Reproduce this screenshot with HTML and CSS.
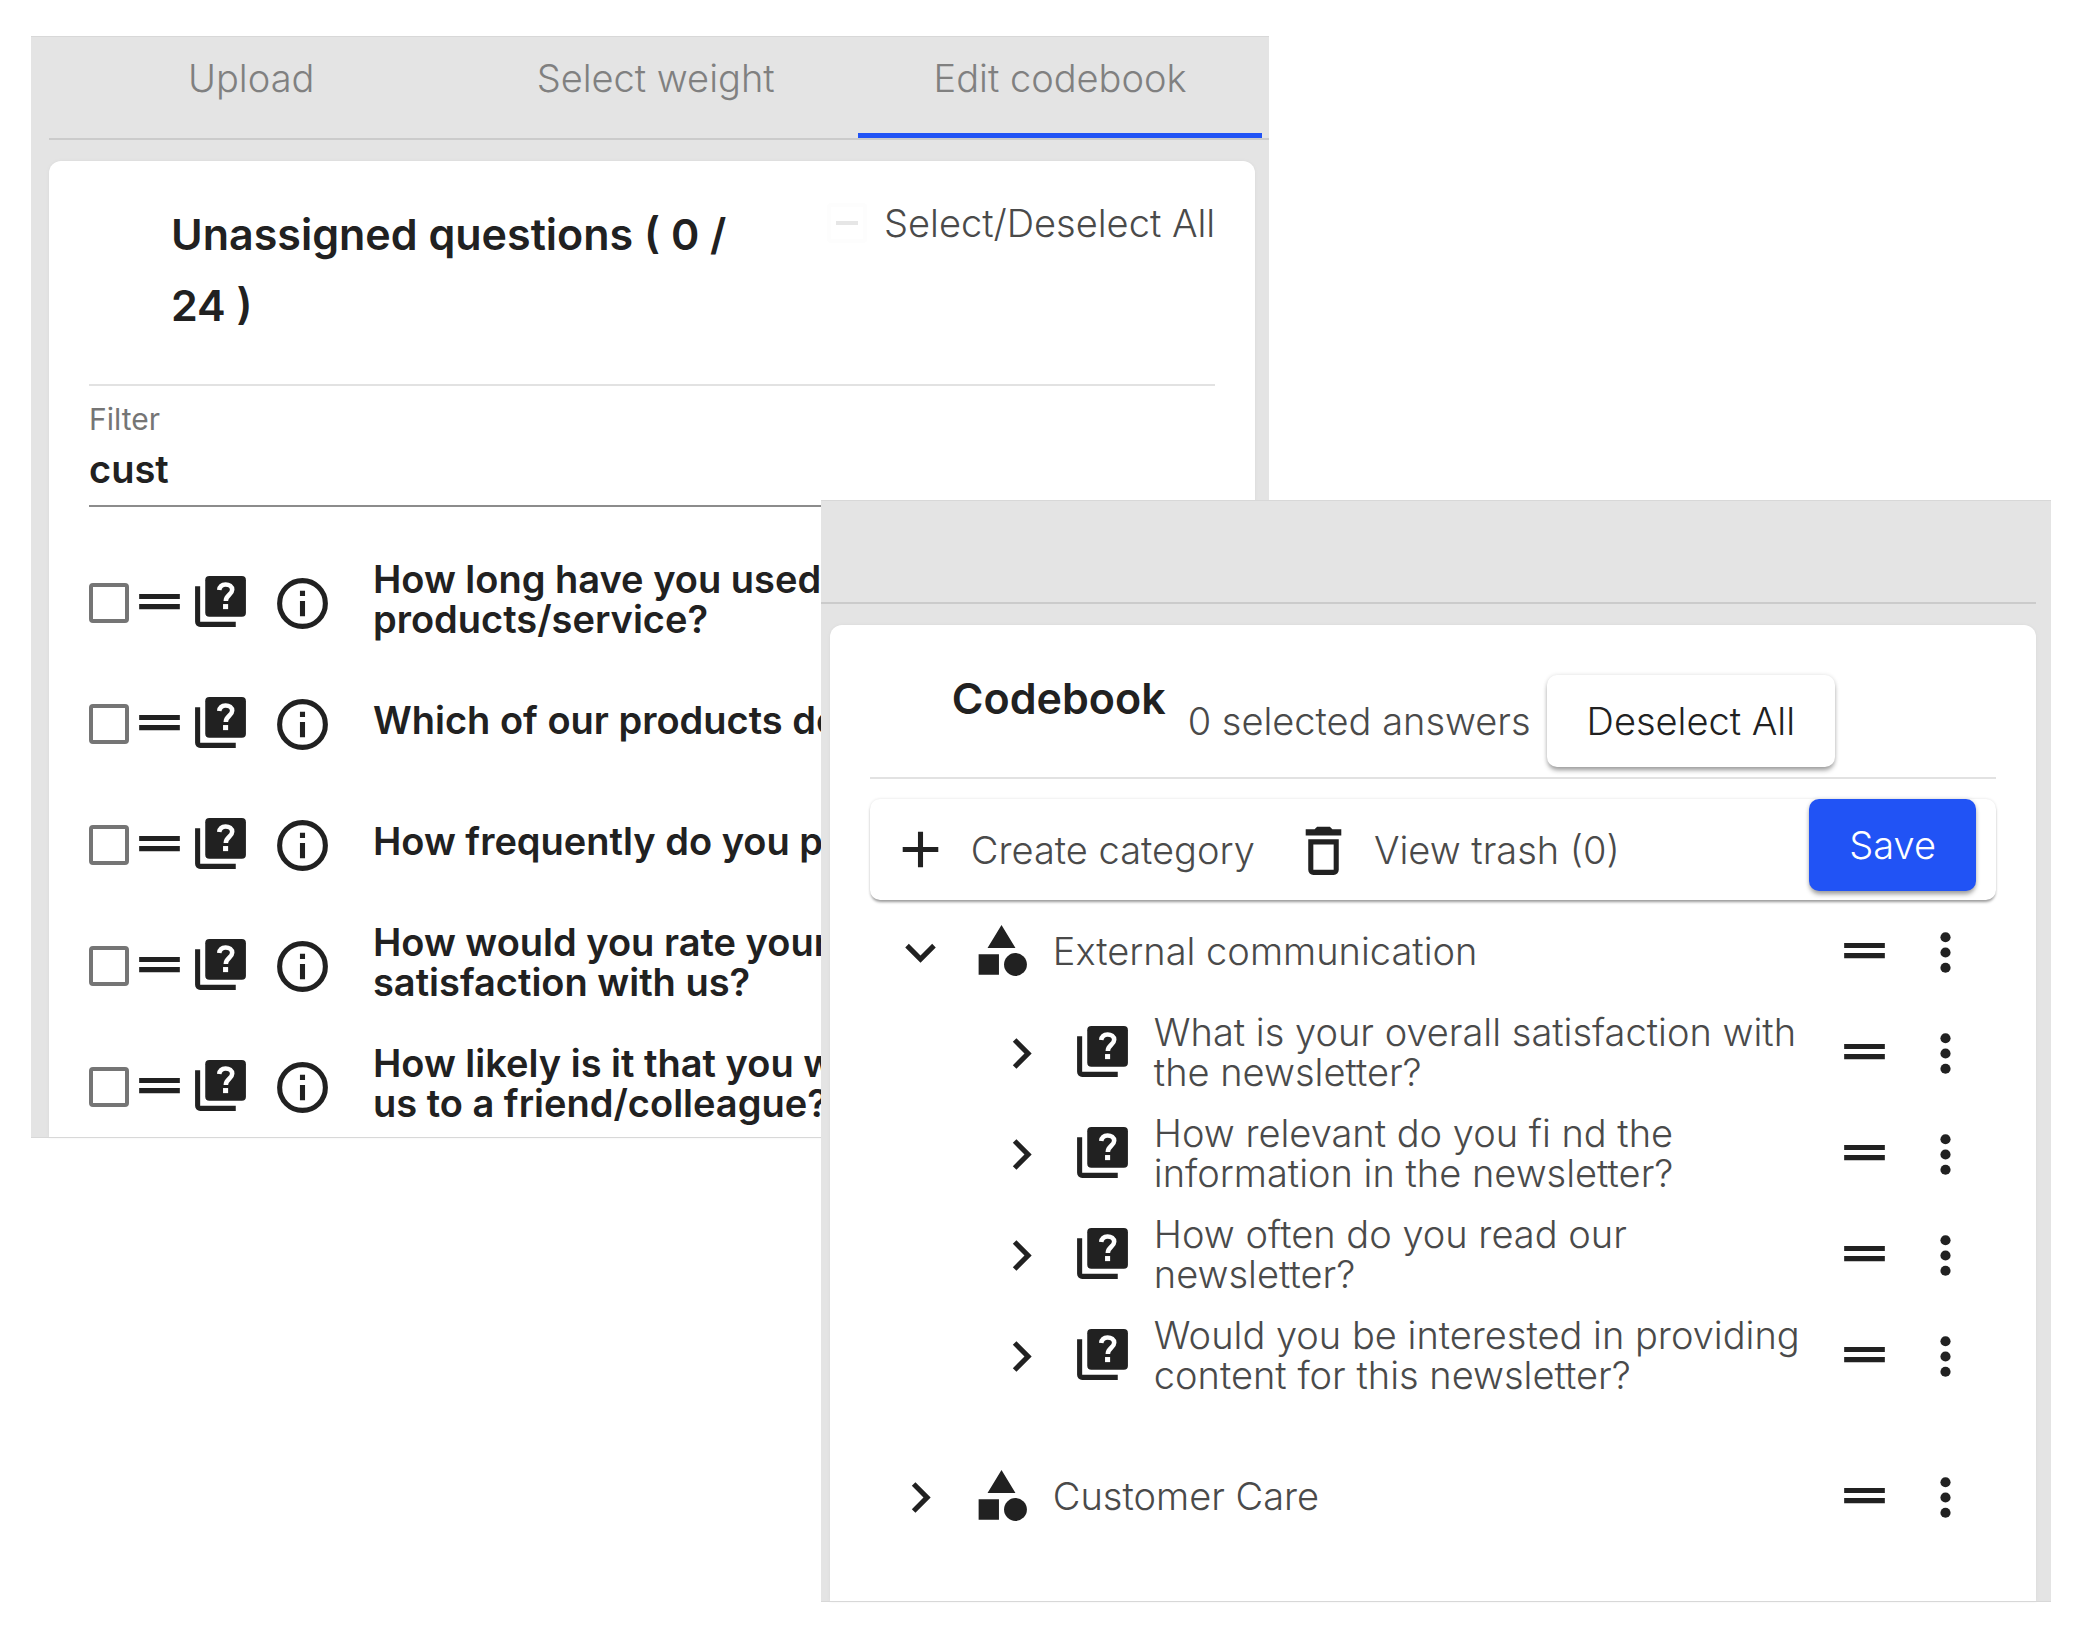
FILE: index.html
```html
<!DOCTYPE html>
<html lang="en">
<head>
  <meta charset="UTF-8">
  <meta name="viewport" content="width=device-width, initial-scale=1.0">
  <title>Edit codebook</title>
  <link rel="stylesheet" href="styles.css">
</head>
<body>

  <!-- Icons -->
  <svg class="sprite" aria-hidden="true">
    <symbol id="drag" viewBox="0 0 24 24"><path d="M4 9h16v2H4zM4 13h16v2H4z"/></symbol>
    <symbol id="quiz" viewBox="0 0 24 24">
      <path d="M4 6H2v14a2 2 0 0 0 2 2h14v-2H4z"/>
      <rect x="6" y="2" width="16" height="16" rx="1.6"/>
      <path d="M11.500 7.500c.2-1.500 1.200-2.200 2.500-2.200 1.400 0 2.600.8 2.600 2.100 0 1.900-2.500 2.100-2.500 4.400" fill="none" stroke="#fff" stroke-width="1.800"/>
      <rect x="13" y="13" width="2" height="2" fill="#fff"/>
    </symbol>
    <symbol id="info" viewBox="0 0 24 24"><circle cx="12" cy="12" r="9" fill="none" stroke="currentColor" stroke-width="2"/><path d="M11 7h2v2h-2zM11 11h2v6h-2z"/></symbol>
    <symbol id="plus" viewBox="0 0 24 24"><path d="M19 13h-6v6h-2v-6H5v-2h6V5h2v6h6z"/></symbol>
    <symbol id="trash" viewBox="0 0 24 24"><path d="M6 20a2 2 0 0 0 2 2h8a2 2 0 0 0 2-2V8H6zM8 10h8v10H8zM15.500 4l-1-1h-5l-1 1H5v2.500h14V4z"/></symbol>
    <symbol id="down" viewBox="0 0 24 24"><path d="M7.410 8.590 12 13.170l4.590-4.580L18 10l-6 6-6-6z"/></symbol>
    <symbol id="right" viewBox="0 0 24 24"><path d="M8.590 16.590 13.170 12 8.590 7.410 10 6l6 6-6 6z"/></symbol>
    <symbol id="category" viewBox="0 0 24 24"><path d="m12 2-5.500 9h11zM3 13.500h8v8H3z"/><circle cx="17.500" cy="17.500" r="4.500"/></symbol>
    <symbol id="more" viewBox="0 0 24 24"><circle cx="12" cy="6" r="2"/><circle cx="12" cy="12" r="2"/><circle cx="12" cy="18" r="2"/></symbol>
  </svg>

  <main class="stage">

    <!-- Unassigned questions -->
    <section class="window window-questions">
      <nav class="tabs" role="tablist">
        <button class="tab" role="tab">Upload</button>
        <button class="tab" role="tab">Select weight</button>
        <button class="tab tab-active" role="tab" aria-selected="true">Edit codebook</button>
      </nav>

      <div class="card">
        <header class="card-header">
          <h2 class="title">Unassigned questions ( 0 / 24 )</h2>
          <label class="select-all"><input type="checkbox" class="check-all" disabled> Select/Deselect All</label>
        </header>

        <div class="filter">
          <label class="filter-label" for="filter">Filter</label>
          <input class="filter-input" type="text" id="filter" value="cust">
        </div>

        <ul class="questions">
          <li class="question">
            <input type="checkbox" class="check" id="q1">
            <svg class="icon"><use href="#drag"/></svg>
            <svg class="icon"><use href="#quiz"/></svg>
            <svg class="icon icon-info"><use href="#info"/></svg>
            <label for="q1">How long have you used<br>products/service?</label>
          </li>
          <li class="question">
            <input type="checkbox" class="check" id="q2">
            <svg class="icon"><use href="#drag"/></svg>
            <svg class="icon"><use href="#quiz"/></svg>
            <svg class="icon icon-info"><use href="#info"/></svg>
            <label for="q2">Which of our products do</label>
          </li>
          <li class="question">
            <input type="checkbox" class="check" id="q3">
            <svg class="icon"><use href="#drag"/></svg>
            <svg class="icon"><use href="#quiz"/></svg>
            <svg class="icon icon-info"><use href="#info"/></svg>
            <label for="q3">How frequently do you purchase</label>
          </li>
          <li class="question">
            <input type="checkbox" class="check" id="q4">
            <svg class="icon"><use href="#drag"/></svg>
            <svg class="icon"><use href="#quiz"/></svg>
            <svg class="icon icon-info"><use href="#info"/></svg>
            <label for="q4">How would you rate your<br>satisfaction with us?</label>
          </li>
          <li class="question">
            <input type="checkbox" class="check" id="q5">
            <svg class="icon"><use href="#drag"/></svg>
            <svg class="icon"><use href="#quiz"/></svg>
            <svg class="icon icon-info"><use href="#info"/></svg>
            <label for="q5">How likely is it that you would<br>us to a friend/colleague?</label>
          </li>
        </ul>
      </div>
    </section>

    <!-- Codebook -->
    <section class="window window-codebook">
      <div class="tabs tabs-empty"></div>

      <div class="card">
        <header class="card-header codebook-header">
          <h2 class="title">Codebook</h2>
          <span class="selected">0 selected answers</span>
          <button class="button">Deselect All</button>
        </header>

        <div class="toolbar">
          <button class="tool"><svg class="icon"><use href="#plus"/></svg>Create category</button>
          <button class="tool"><svg class="icon"><use href="#trash"/></svg>View trash (0)</button>
          <button class="button button-save">Save</button>
        </div>

        <ul class="tree">
          <li>
            <div class="node">
              <button class="icon-button" aria-label="Collapse"><svg class="icon"><use href="#down"/></svg></button>
              <svg class="icon"><use href="#category"/></svg>
              <span class="node-text">External communication</span>
              <svg class="icon"><use href="#drag"/></svg>
              <button class="icon-button" aria-label="More"><svg class="icon"><use href="#more"/></svg></button>
            </div>
            <ul class="tree-children">
              <li class="node">
                <button class="icon-button" aria-label="Expand"><svg class="icon"><use href="#right"/></svg></button>
                <svg class="icon"><use href="#quiz"/></svg>
                <span class="node-text">What is your overall satisfaction with<br>the newsletter?</span>
                <svg class="icon"><use href="#drag"/></svg>
                <button class="icon-button" aria-label="More"><svg class="icon"><use href="#more"/></svg></button>
              </li>
              <li class="node">
                <button class="icon-button" aria-label="Expand"><svg class="icon"><use href="#right"/></svg></button>
                <svg class="icon"><use href="#quiz"/></svg>
                <span class="node-text">How relevant do you fi nd the<br>information in the newsletter?</span>
                <svg class="icon"><use href="#drag"/></svg>
                <button class="icon-button" aria-label="More"><svg class="icon"><use href="#more"/></svg></button>
              </li>
              <li class="node">
                <button class="icon-button" aria-label="Expand"><svg class="icon"><use href="#right"/></svg></button>
                <svg class="icon"><use href="#quiz"/></svg>
                <span class="node-text">How often do you read our<br>newsletter?</span>
                <svg class="icon"><use href="#drag"/></svg>
                <button class="icon-button" aria-label="More"><svg class="icon"><use href="#more"/></svg></button>
              </li>
              <li class="node">
                <button class="icon-button" aria-label="Expand"><svg class="icon"><use href="#right"/></svg></button>
                <svg class="icon"><use href="#quiz"/></svg>
                <span class="node-text">Would you be interested in providing<br>content for this newsletter?</span>
                <svg class="icon"><use href="#drag"/></svg>
                <button class="icon-button" aria-label="More"><svg class="icon"><use href="#more"/></svg></button>
              </li>
            </ul>
          </li>
          <li>
            <div class="node">
              <button class="icon-button" aria-label="Expand"><svg class="icon"><use href="#right"/></svg></button>
              <svg class="icon"><use href="#category"/></svg>
              <span class="node-text">Customer Care</span>
              <svg class="icon"><use href="#drag"/></svg>
              <button class="icon-button" aria-label="More"><svg class="icon"><use href="#more"/></svg></button>
            </div>
          </li>
        </ul>
      </div>
    </section>

  </main>

</body>
</html>
```
FILE: styles.css
```css
* {
  box-sizing: border-box;
}
body {
  margin: 0;
  background-color: #fff;
  color: #4a4a4a;
  font-family: Inter, "Open Sans", sans-serif;
  font-size: 38px;
  font-weight: 300;
  line-height: 40px;
}
button, input {
  font: inherit;
  color: inherit;
}
button {
  padding: 0;
  border: none;
  background: none;
  cursor: pointer;
  white-space: nowrap;
}
ul {
  margin: 0;
  padding: 0;
  list-style: none;
}
.sprite {
  display: none;
}
.icon {
  display: block;
  flex: none;
  width: 61px;
  height: 61px;
  color: #212121;
  fill: currentColor;
}

/* Two windows share one grid cell and overlap */
.stage {
  display: grid;
  padding: 36px 39px 36px 31px;
}
.window {
  grid-area: 1 / 1;
  border-top: 1px solid #d8d8d8;
  border-bottom: 1px solid #d8d8d8;
  background-color: #e4e4e4;
}
.window-questions {
  width: 61.3%;
  align-self: start;
  padding: 0 14px 0 18px;
}
.window-codebook {
  z-index: 1;
  width: 60.9%;
  justify-self: end;
  margin-top: 464px;
  padding: 0 15px 0 9px;
}
.card {
  padding: 0 40px;
  border-radius: 12px 12px 0 0;
  background-color: #fff;
  box-shadow: 0 0 3px #d8d8d8;
}

/* Tabs */
.tabs {
  display: flex;
  height: 103px;
  margin: 0 -14px 21px 0;
  padding-right: 7px;
  border-bottom: 2px solid #cbcbcb;
}
.tabs-empty {
  margin: 0 0 21px -9px;
}
.tab {
  flex: 1;
  padding-bottom: 14px;
  border-bottom: 5px solid transparent;
  color: #808080;
}
.tab-active {
  border-bottom-color: #2153f5;
}

/* Card header */
.card-header {
  display: flex;
  justify-content: space-between;
  align-items: flex-start;
  height: 225px;
  padding: 38px 0 0 82px;
  border-bottom: 2px solid #e2e2e2;
}
.title {
  margin: 0;
  max-width: 600px;
  color: #212121;
  font-size: 43px;
  font-weight: 600;
  line-height: 71px;
}
.select-all {
  display: flex;
  align-items: center;
  gap: 17px;
  padding-top: 4px;
  white-space: nowrap;
}
.check-all, .check {
  appearance: none;
  flex: none;
  width: 40px;
  height: 40px;
  margin: 0;
  border: 4px solid #757575;
  border-radius: 4px;
  background-color: #fff;
}
.check-all {
  border-color: #fdfdfd;
  background: linear-gradient(#e6e6e6, #e6e6e6) center / 22px 4px no-repeat;
}

/* Filter */
.filter {
  display: flex;
  flex-direction: column;
  padding-top: 13px;
}
.filter-label {
  color: #757575;
  font-size: 30px;
  font-weight: 400;
}
.filter-input {
  width: 100%;
  height: 68px;
  padding: 0 0 6px;
  border: none;
  border-bottom: 2px solid #8c8c8c;
  outline: none;
  color: #212121;
  font-weight: 600;
}

/* Questions */
.questions {
  display: flex;
  flex-direction: column;
  gap: 33px;
  padding: 52px 0 6px;
}
.question {
  display: flex;
  align-items: center;
  height: 88px;
  color: #212121;
  font-weight: 600;
}
.question label {
  padding-bottom: 8px;
  white-space: nowrap;
}
.question .icon {
  margin-bottom: 4px;
}
.question .icon-info {
  margin: 0 40px 0 21px;
}

/* Buttons */
.button {
  flex: none;
  height: 92px;
  padding: 0 40px;
  border-radius: 10px;
  background-color: #fff;
  color: #212121;
  box-shadow: 0 4px 5px -1px #9a9a9a, 0 0 4px #e0e0e0;
}
.button-save {
  margin-left: auto;
  background-color: #2153f5;
  color: #fff;
}

/* Codebook */
.codebook-header {
  justify-content: flex-start;
  height: 154px;
}
.codebook-header .selected {
  padding: 38px 16px 0 22px;
}
.codebook-header .button {
  margin-top: 12px;
}
.toolbar {
  display: flex;
  align-items: flex-start;
  height: 101px;
  margin-top: 20px;
  padding: 0 20px;
  border-radius: 10px;
  box-shadow: 0 3px 3px -1px #9a9a9a, 0 0 3px #e0e0e0;
}
.tool {
  display: flex;
  align-items: center;
  gap: 20px;
  height: 101px;
  margin-right: 38px;
}
.node {
  display: flex;
  align-items: center;
  height: 101px;
}
.icon-button {
  margin: 0 20px;
  padding-top: 4px;
}
.node-text {
  flex: 1;
  padding-left: 21px;
}
.tree-children {
  padding: 0 0 40px 101px;
}
.window-codebook .card {
  padding-bottom: 55px;
}
```
